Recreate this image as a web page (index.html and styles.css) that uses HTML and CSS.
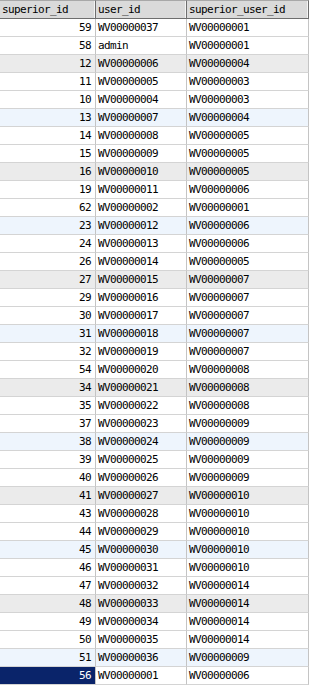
FILE: index.html
```html
<!DOCTYPE html>
<html>
<head>
<meta charset="utf-8">
<link rel="stylesheet" href="styles.css">
</head>
<body>
<table class="grid">
<colgroup><col class="c1"><col class="c2"><col class="c3"></colgroup>
<thead>
<tr><th>superior_id</th><th>user_id</th><th>superior_user_id</th></tr>
</thead>
<tbody>
<tr><td class="num">59</td><td>WV00000037</td><td>WV00000001</td></tr>
<tr><td class="num">58</td><td>admin</td><td>WV00000001</td></tr>
<tr class="gray"><td class="num">12</td><td>WV00000006</td><td>WV00000004</td></tr>
<tr><td class="num">11</td><td>WV00000005</td><td>WV00000003</td></tr>
<tr><td class="num">10</td><td>WV00000004</td><td>WV00000003</td></tr>
<tr class="blue"><td class="num">13</td><td>WV00000007</td><td>WV00000004</td></tr>
<tr><td class="num">14</td><td>WV00000008</td><td>WV00000005</td></tr>
<tr><td class="num">15</td><td>WV00000009</td><td>WV00000005</td></tr>
<tr class="gray"><td class="num">16</td><td>WV00000010</td><td>WV00000005</td></tr>
<tr><td class="num">19</td><td>WV00000011</td><td>WV00000006</td></tr>
<tr><td class="num">62</td><td>WV00000002</td><td>WV00000001</td></tr>
<tr class="blue"><td class="num">23</td><td>WV00000012</td><td>WV00000006</td></tr>
<tr><td class="num">24</td><td>WV00000013</td><td>WV00000006</td></tr>
<tr><td class="num">26</td><td>WV00000014</td><td>WV00000005</td></tr>
<tr class="gray"><td class="num">27</td><td>WV00000015</td><td>WV00000007</td></tr>
<tr><td class="num">29</td><td>WV00000016</td><td>WV00000007</td></tr>
<tr><td class="num">30</td><td>WV00000017</td><td>WV00000007</td></tr>
<tr class="blue"><td class="num">31</td><td>WV00000018</td><td>WV00000007</td></tr>
<tr><td class="num">32</td><td>WV00000019</td><td>WV00000007</td></tr>
<tr><td class="num">54</td><td>WV00000020</td><td>WV00000008</td></tr>
<tr class="gray"><td class="num">34</td><td>WV00000021</td><td>WV00000008</td></tr>
<tr><td class="num">35</td><td>WV00000022</td><td>WV00000008</td></tr>
<tr><td class="num">37</td><td>WV00000023</td><td>WV00000009</td></tr>
<tr class="blue"><td class="num">38</td><td>WV00000024</td><td>WV00000009</td></tr>
<tr><td class="num">39</td><td>WV00000025</td><td>WV00000009</td></tr>
<tr><td class="num">40</td><td>WV00000026</td><td>WV00000009</td></tr>
<tr class="gray"><td class="num">41</td><td>WV00000027</td><td>WV00000010</td></tr>
<tr><td class="num">43</td><td>WV00000028</td><td>WV00000010</td></tr>
<tr><td class="num">44</td><td>WV00000029</td><td>WV00000010</td></tr>
<tr class="blue"><td class="num">45</td><td>WV00000030</td><td>WV00000010</td></tr>
<tr><td class="num">46</td><td>WV00000031</td><td>WV00000010</td></tr>
<tr><td class="num">47</td><td>WV00000032</td><td>WV00000014</td></tr>
<tr class="gray"><td class="num">48</td><td>WV00000033</td><td>WV00000014</td></tr>
<tr><td class="num">49</td><td>WV00000034</td><td>WV00000014</td></tr>
<tr><td class="num">50</td><td>WV00000035</td><td>WV00000014</td></tr>
<tr class="blue"><td class="num">51</td><td>WV00000036</td><td>WV00000009</td></tr>
<tr><td class="num selected">56</td><td>WV00000001</td><td>WV00000006</td></tr>
</tbody>
</table>
</body>
</html>
```
FILE: styles.css
```css
html, body {
  margin: 0;
  padding: 0;
  background: #ffffff;
}
.grid {
  border-collapse: separate;
  border-spacing: 0;
  table-layout: fixed;
  width: 309px;
  font-family: "DejaVu Sans Mono", "Liberation Mono", monospace;
  font-size: 11px;
  letter-spacing: -0.62px;
  color: #000;
}
.c1 { width: 96px; }
.c2 { width: 91px; }
.c3 { width: 122px; }
.grid th {
  box-sizing: border-box;
  height: 19px;
  padding: 0 0 0 2px;
  text-align: left;
  font-weight: normal;
  background: #dadada;
  border-top: 1px solid #a8a8a8;
  border-bottom: 1px solid #6e6e6e;
  border-right: 1px solid #6e6e6e;
  box-shadow: inset -1px 0 0 #f4f4f4;
  white-space: nowrap;
  overflow: hidden;
  line-height: 16px;
}
.grid td {
  box-sizing: border-box;
  height: 18px;
  padding: 0 0 0 2px;
  border-right: 1px solid #c4c4c4;
  border-bottom: 1px solid #d4d4d4;
  white-space: nowrap;
  overflow: hidden;
  line-height: 17px;
}
.grid td.num {
  text-align: right;
  padding: 0 4px 0 0;
}
.grid tr.gray td { background: #ebebeb; }
.grid tr.blue td { background: #eef5fd; }
.grid td.selected {
  background: #0a246a;
  color: #ffffff;
}
```
